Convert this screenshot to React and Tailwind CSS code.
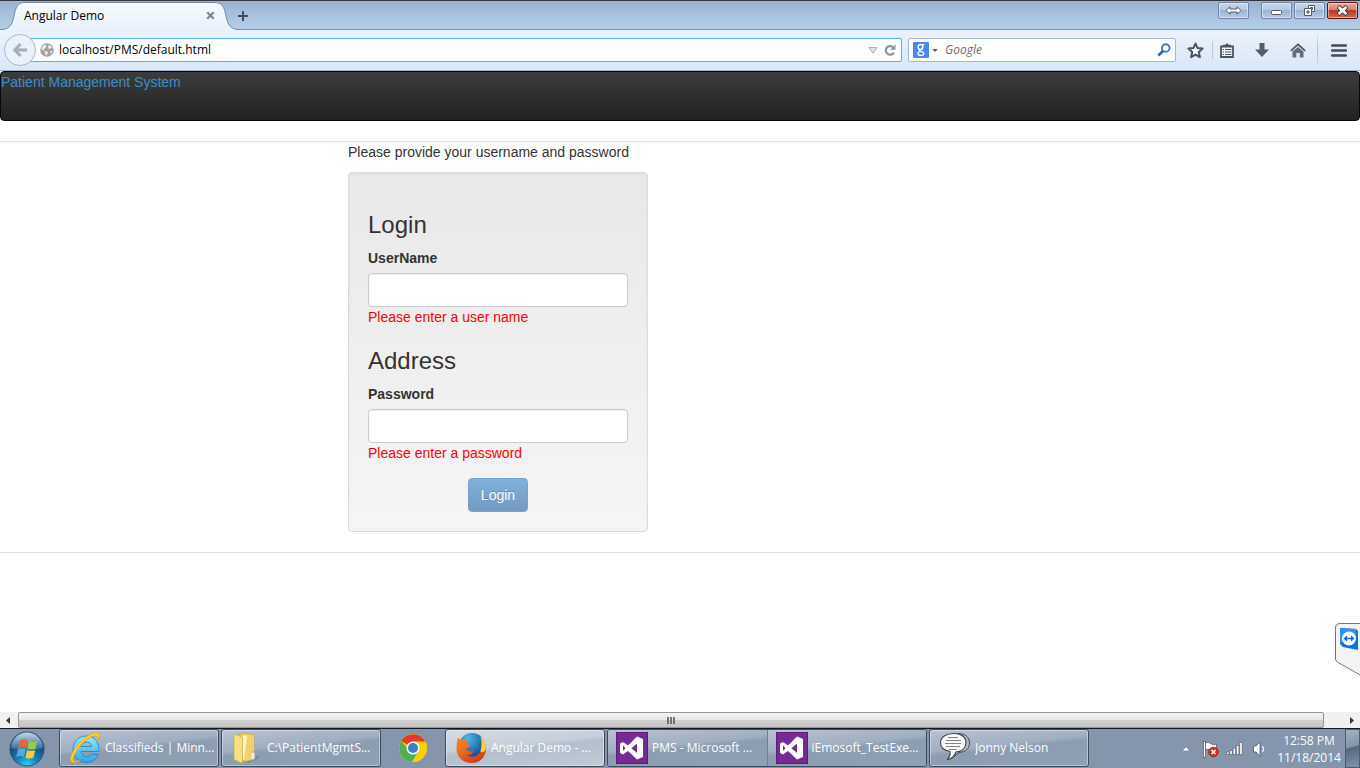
import React from "react";

const uiFont = "font-['Open_Sans','Noto_Sans',sans-serif]";

function Tab() {
  return (
    <div className="relative h-[29px] w-[240px] shrink-0">
      <svg className="absolute left-0 top-0" width="240" height="30" viewBox="0 0 240 30" aria-hidden="true">
        <defs>
          <linearGradient id="tabFill" x1="0" y1="0" x2="0" y2="1">
            <stop offset="0" stopColor="#f6fafe" />
            <stop offset="1" stopColor="#e9f1fb" />
          </linearGradient>
        </defs>
        <path d="M0 30V28.500C9 28.500 12 25 14 15C16 5 18 1.500 25 1.500H214C222 1.500 224 5 226 15C228 25 231 28.500 240 28.500V30Z" fill="url(#tabFill)" />
        <path d="M0 28.500C9 28.500 12 25 14 15C16 5 18 1.500 25 1.500H214C222 1.500 224 5 226 15C228 25 231 28.500 240 28.500" fill="none" stroke="#6f89a6" />
      </svg>
      <div className="relative flex h-full items-center justify-between pl-6 pr-[22px]">
        <h2 className="text-[12px] leading-[16px] text-black">Angular Demo</h2>
        <button aria-label="Close tab" className="flex h-4 w-4 items-center justify-center">
          <svg width="9" height="9" viewBox="0 0 9 9">
            <path d="M1.200 1.200L7.800 7.800M7.800 1.200L1.200 7.800" stroke="#7c8793" strokeWidth="2.200" />
          </svg>
        </button>
      </div>
    </div>
  );
}

function CaptionButton({ label, close, children }) {
  const tone = close
    ? "border-[#5a1420] bg-[linear-gradient(#e6aa9d_0%,#d9806f_48%,#b93a26_50%,#cf6a4c_100%)]"
    : "border-[#6d83a3] bg-[linear-gradient(#c5d6ea_0%,#b4c9e1_48%,#9ab3d0_50%,#b5cce5_100%)]";
  return (
    <button
      aria-label={label}
      className={"flex h-[17px] w-[31px] items-center justify-center rounded-[2px] border shadow-[inset_0_0_0_1px_rgba(255,255,255,0.45)] " + tone}
    >
      {children}
    </button>
  );
}

function TitleBar() {
  return (
    <header className="flex h-[30px] items-start justify-between border-b border-t border-b-[#7892af] border-t-[#3b3639] bg-[linear-gradient(#98b3d3,#b5cee9)]">
      <div className="flex items-center">
        <Tab />
        <button aria-label="Open a new tab" className="-ml-[3px] flex h-[29px] w-3 items-center justify-center">
          <svg width="12" height="12" viewBox="0 0 12 12">
            <path d="M6 1V11M1 6H11" stroke="#3f4c59" strokeWidth="2" />
          </svg>
        </button>
      </div>
      <div className="flex gap-0.5 pr-0.5 pt-px">
        <div className="mr-[10px] flex">
          <CaptionButton label="Resize">
            <svg width="17" height="9" viewBox="0 0 17 9">
              <path d="M1 4.500L5 .8V3H12V.8L16 4.500L12 8.200V6H5V8.200Z" fill="#fff" stroke="#535b68" />
            </svg>
          </CaptionButton>
        </div>
        <CaptionButton label="Minimize">
          <svg width="11" height="11" viewBox="0 0 11 11">
            <rect x=".5" y="5.500" width="10" height="4" rx="1" fill="#fff" stroke="#535b68" />
          </svg>
        </CaptionButton>
        <CaptionButton label="Restore">
          <svg width="11" height="11" viewBox="0 0 11 11">
            <path d="M4.500 .5H10.500V6.500H4.500Z" fill="#fff" stroke="#535b68" />
            <path d="M6.500 2.500H8.500V4.500H6.500Z" fill="#9ab3d0" stroke="#535b68" />
            <path d="M.5 3.500H7.500V10.500H.5Z" fill="#fff" stroke="#535b68" />
            <path d="M3 6H5V8H3Z" fill="#9ab3d0" stroke="#535b68" />
          </svg>
        </CaptionButton>
        <CaptionButton label="Close" close>
          <svg width="13" height="11" viewBox="0 0 13 11">
            <path d="M2 1.500L11 9.500M11 1.500L2 9.500" stroke="#4a3a42" strokeWidth="4.600" />
            <path d="M2.600 2L10.400 9M10.400 2L2.600 9" stroke="#fff" strokeWidth="2.600" />
          </svg>
        </CaptionButton>
      </div>
    </header>
  );
}

function ToolButton({ label, width, children }) {
  return (
    <button aria-label={label} className={"flex h-10 shrink-0 items-center justify-center " + width}>
      {children}
    </button>
  );
}

function Toolbar() {
  return (
    <div className="flex h-[41px] items-center border-b border-[#a2b8ce] bg-[linear-gradient(#ebf2fb,#d9e7f7)]">
      <button
        aria-label="Back"
        className="relative z-10 ml-1 flex h-8 w-8 shrink-0 items-center justify-center rounded-full border border-[#a9bacb] bg-[#e9f1fa]"
      >
        <svg width="14" height="14" viewBox="0 0 14 14">
          <path d="M7.500 1L1.800 7L7.500 13M2 7H14" fill="none" stroke="#a4adb8" strokeWidth="3" />
        </svg>
      </button>
      <div className="-ml-[6px] flex h-6 min-w-0 flex-1 items-center rounded-r-[2px] border border-[#5cadf2] bg-white pl-[9px] pr-[5px]">
        <svg className="shrink-0" width="14" height="14" viewBox="0 0 14 14" aria-hidden="true">
          <circle cx="7" cy="7" r="6.800" fill="#a3a3a3" />
          <path d="M2 4L4 2L6.500 2L6 4L4.500 5.500L3.500 7.500L1.500 6.500ZM9 1.500L11 3L12.500 5.500L10.500 5L9 6.500L8 4.500ZM4.500 8L7.500 8.500L8 10L6.500 12.500L5 11ZM10 8L12.500 8L10.500 11Z" fill="#ececec" />
        </svg>
        <input
          aria-label="Address"
          defaultValue="localhost/PMS/default.html"
          className="ml-[5px] min-w-0 flex-1 bg-transparent text-[12px] leading-[16px] text-black outline-none"
        />
        <button aria-label="History" className="mr-[6px]">
          <svg width="10" height="7" viewBox="0 0 10 7">
            <path d="M.8 .5H9.200L5 6.300Z" fill="#dde3e9" stroke="#a6b1bd" />
          </svg>
        </button>
        <button aria-label="Reload">
          <svg width="12" height="12" viewBox="0 0 12 12">
            <path d="M9 3.200A4.300 4.300 0 1 0 9.800 8.600" fill="none" stroke="#8996a4" strokeWidth="2.200" />
            <path d="M11.500 .3V5.700H6.200Z" fill="#8996a4" />
          </svg>
        </button>
      </div>
      <div className="ml-[6px] flex h-6 w-[268px] shrink-0 items-center rounded-[2px] border border-[#a3b8cf] bg-white pl-1 pr-1">
        <button aria-label="Choose search engine" className="flex items-center gap-[3px]">
          <svg width="16" height="16" viewBox="0 0 16 16">
            <rect width="16" height="16" rx="1" fill="#4787ee" />
            <g fill="none" stroke="#fff">
              <ellipse cx="7.500" cy="5" rx="2.300" ry="2.500" strokeWidth="1.400" />
              <path d="M8.500 2.600H11.500M6.500 7.400C5.500 8.500 6.500 8.900 8.500 9.400" strokeWidth="1.100" />
              <ellipse cx="7.800" cy="11.500" rx="3" ry="1.900" strokeWidth="1.300" />
            </g>
          </svg>
          <svg width="6" height="3" viewBox="0 0 6 3">
            <path d="M0 0H6L3 3Z" fill="#666" />
          </svg>
        </button>
        <input
          aria-label="Search"
          placeholder="Google"
          className="ml-[7px] min-w-0 flex-1 bg-transparent text-[12px] italic leading-[16px] outline-none placeholder:text-[#6c6c6c]"
        />
        <button aria-label="Submit search">
          <svg width="14" height="14" viewBox="0 0 14 14">
            <circle cx="8.800" cy="5" r="3.800" fill="none" stroke="#3c7ab9" strokeWidth="1.900" />
            <path d="M6 8L1.300 12.500" stroke="#3465a4" strokeWidth="2.700" />
          </svg>
        </button>
      </div>
      <div className="ml-[3px] flex items-center text-[#49545f]">
        <ToolButton label="Bookmark this page" width="w-[33px]">
          <svg width="17" height="17" viewBox="0 0 17 17">
            <path d="M8.500 1.600L10.600 6.100L15.600 6.600L11.800 10L12.900 15.200L8.500 12.600L4.100 15.200L5.200 10L1.400 6.600L6.400 6.100Z" fill="#f3f7fb" stroke="currentColor" strokeWidth="2" strokeLinejoin="round" />
          </svg>
        </ToolButton>
        <span className="h-[18px] w-px bg-[#b9c9da]" />
        <ToolButton label="Bookmarks" width="w-[28px]">
          <svg width="14" height="15" viewBox="0 0 14 15">
            <path d="M1 3.500H13V14H1Z" fill="#f3f7fb" stroke="currentColor" strokeWidth="1.800" />
            <path d="M3 3.500V1.800H5.500L7 0L8.500 1.800H11V3.500Z" fill="currentColor" />
            <path d="M2.500 6.500H4M5 6.500H11.500M2.500 9H4M5 9H11.500M2.500 11.500H4M5 11.500H11.500" stroke="currentColor" strokeWidth="1" />
          </svg>
        </ToolButton>
        <ToolButton label="Downloads" width="w-[42px]">
          <svg width="14" height="14" viewBox="0 0 14 14">
            <path d="M4.500 0H9.500V6.500H14L7 14L0 6.500H4.500Z" fill="#525e69" />
          </svg>
        </ToolButton>
        <ToolButton label="Home" width="w-[30px]">
          <svg width="16" height="15" viewBox="0 0 16 15">
            <path d="M2.500 8.500L8 4L13.500 8.500V14.500H9.800V10H6.300V14.500H2.500Z" fill="#626d77" />
            <path d="M.8 7.800L8 1.300L15.200 7.800" fill="none" stroke="#49545f" strokeWidth="1.700" />
          </svg>
        </ToolButton>
        <span className="ml-1 h-9 w-px bg-[linear-gradient(transparent,#a6b8cb,transparent)]" />
        <ToolButton label="Menu" width="w-[42px]">
          <svg width="16" height="13" viewBox="0 0 16 13">
            <path d="M1.200 1.500H14.800M1.200 6.500H14.800M1.200 11.500H14.800" stroke="#414c57" strokeWidth="2.600" strokeLinecap="round" />
          </svg>
        </ToolButton>
      </div>
    </div>
  );
}

function Field({ heading, id, label, type, error }) {
  return (
    <section className="flex flex-col">
      <h3 className="mb-[10px] text-[24px] leading-[26px]">{heading}</h3>
      <label htmlFor={id} className="mb-[5px] font-bold">{label}</label>
      <input
        id={id}
        type={type}
        className="h-[34px] w-full rounded-[4px] border border-[#ccc] bg-white px-3 shadow-[inset_0_1px_1px_rgba(0,0,0,0.075)] outline-none"
      />
      <p className="text-[#f00]">{error}</p>
    </section>
  );
}

function Page() {
  return (
    <div className="relative flex-1 bg-white font-['Liberation_Sans',Arial,sans-serif] text-[14px] leading-[20px] text-[#333]">
      <nav className="h-[50px] rounded-[4px] border border-[#080808] bg-[linear-gradient(#3c3c3c,#222)] text-[#428bca]">
        <a href="#home">Patient Management System</a>
      </nav>
      <main className="mt-5 border-y border-[#e0e0e0] pb-5">
        <div className="ml-[348px] w-[300px]">
          <p className="mb-[10px]">Please provide your username and password</p>
          <form
            onSubmit={(e) => e.preventDefault()}
            className="rounded-[4px] border border-[#dcdcdc] bg-[linear-gradient(#e8e8e8,#f5f5f5)] px-[19px] pb-[19px] pt-[39px] shadow-[inset_0_1px_3px_rgba(0,0,0,0.05),0_1px_0_rgba(255,255,255,0.1)]"
          >
            <div className="flex flex-col gap-[21px]">
              <Field heading="Login" id="username" label="UserName" type="text" error="Please enter a user name" />
              <Field heading="Address" id="password" label="Password" type="password" error="Please enter a password" />
            </div>
            <div className="mt-[15px] flex justify-center">
              <button className="h-[34px] rounded-[4px] border border-[#77a3cb] bg-[linear-gradient(#81b0da,#729bc0)] px-3 text-white [text-shadow:0_-1px_0_rgba(0,0,0,0.2)]">
                Login
              </button>
            </div>
          </form>
        </div>
      </main>
      <button aria-label="TeamViewer" className="absolute bottom-[36px] right-0">
        <svg width="25" height="53" viewBox="0 0 25 53">
          <path d="M26 .5H5Q.5 .5 .5 5V36Q.5 38 2.500 39.200L26 52.500" fill="#f4f4f4" stroke="#777" />
          <path d="M5 5L21 6L23 8V27L8 24L5 21Z" fill="#0c72df" />
          <path d="M5 5L21 6V16L5 20Z" fill="#2f93f4" />
          <circle cx="14" cy="15.500" r="7" fill="#f7fbff" />
          <path d="M8.500 15.500L12 12.500V14.700H16V12.500L19.500 15.500L16 18.500V16.300H12V18.500Z" fill="#0f6bd0" />
        </svg>
      </button>
    </div>
  );
}

function ScrollBar() {
  return (
    <div className="flex h-4 bg-[#f0f0f0]">
      <button aria-label="Scroll left" className="mr-[2px] flex w-4 items-center justify-center">
        <svg width="4" height="7" viewBox="0 0 4 7"><path d="M4 0V7L0 3.500Z" fill="#333" /></svg>
      </button>
      <div className="flex flex-1 items-center justify-center rounded-[2px] border border-[#949494] bg-[linear-gradient(#f4f4f4_0%,#e6e6e6_48%,#d0d0d0_52%,#c4c4c4_100%)]">
        <svg width="8" height="7" viewBox="0 0 8 7" aria-hidden="true">
          <path d="M1 0V7M4 0V7M7 0V7" stroke="#505050" strokeWidth="1.500" />
        </svg>
      </div>
      <button aria-label="Scroll right" className="ml-[19px] flex w-[17px] items-center justify-center">
        <svg width="4" height="7" viewBox="0 0 4 7"><path d="M0 0V7L4 3.500Z" fill="#333" /></svg>
      </button>
    </div>
  );
}

function WindowsOrb() {
  return (
    <svg width="36" height="36" viewBox="0 0 36 36" aria-hidden="true">
      <defs>
        <radialGradient id="orb" cx=".5" cy="1" r=".95">
          <stop offset="0" stopColor="#35d4fa" />
          <stop offset=".35" stopColor="#1581be" />
          <stop offset=".7" stopColor="#174f80" />
          <stop offset="1" stopColor="#4f81a8" />
        </radialGradient>
        <linearGradient id="orbShine" x1="0" y1="0" x2="0" y2="1">
          <stop offset="0" stopColor="#dce9f2" stopOpacity=".8" />
          <stop offset="1" stopColor="#9ec0d8" stopOpacity=".25" />
        </linearGradient>
      </defs>
      <circle cx="18" cy="18" r="17" fill="url(#orb)" stroke="#2b4d70" />
      <path d="M2.500 17A15.500 15.500 0 0 1 33.500 17Q18 21 2.500 17Z" fill="url(#orbShine)" />
      <path d="M11 9.500Q15 7 18.500 9.200L17 17Q13.500 15 9.200 17Z" fill="#ec6530" />
      <path d="M20 9.800Q24 12 28.300 9.800L26.500 17.500Q22.500 19.500 18.300 17.500Z" fill="#9bcb42" />
      <path d="M8.900 18.300Q13 16.400 16.700 18.400L15 26Q11.500 24 7.200 26Z" fill="#4ca9e4" />
      <path d="M18 18.900Q22 20.800 26.200 18.900L24.500 26.500Q20.500 28.500 16.400 26.700Z" fill="#fdcb38" />
    </svg>
  );
}

function ExplorerIcon() {
  return (
    <svg width="32" height="32" viewBox="0 0 32 32" aria-hidden="true">
      <defs>
        <linearGradient id="ie" x1="0" y1="0" x2="0" y2="1">
          <stop offset="0" stopColor="#9be6fc" />
          <stop offset="1" stopColor="#28a7e4" />
        </linearGradient>
      </defs>
      <path fillRule="evenodd" d="M30 19.500H12C12.500 25.500 20.500 26 22.500 22.500H29.500C27 28.500 22 30.500 17.500 30.500C9.500 30.500 4 25.500 4 17.500C4 9.500 10 4 17.500 4C25.500 4 30.500 10.500 30 19.500ZM12 14.500H22.500C22 8.500 12.500 8.500 12 14.500Z" fill="url(#ie)" stroke="#1683c2" strokeWidth=".8" />
      <path d="M7 20.500C2 28 3 31.500 11 28C5 32.500 -.5 31 2 24C6 13 19 1 27 .7C31 .6 31.500 4 29.500 8.500C29.500 4 27 3 23 4.500C16 7.500 11 13 7 20.500Z" fill="#ffd02e" stroke="#dfa51a" strokeWidth=".7" />
    </svg>
  );
}

function FolderIcon() {
  return (
    <svg width="32" height="32" viewBox="0 0 32 32" aria-hidden="true">
      <path d="M18 28L29 23L25 28L16 31Z" fill="#53606d" opacity=".4" />
      <path d="M8 1.500H18L23 3V27L12 29L8 27Z" fill="#eac95f" stroke="#c7a344" strokeWidth=".6" />
      <path d="M11 4L16 3L17 26L12 28Z" fill="#fff5be" />
      <path d="M3 2L11.500 5V31.500L3 27.500Z" fill="#f7df85" stroke="#c9a74c" strokeWidth=".7" />
      <path d="M16 4L23 3V28L13 29Z" fill="#f0d16d" />
      <path d="M21 20H24V27L20 28" fill="#e4edf2" stroke="#b19752" strokeWidth=".8" />
    </svg>
  );
}

function ChromeIcon() {
  return (
    <svg width="28" height="28" viewBox="0 0 28 28" aria-hidden="true">
      <circle cx="14" cy="14" r="14" fill="#fbd007" />
      <path d="M14 14L2 7A14 14 0 0 1 26.500 8Z" fill="#e33b2e" />
      <path d="M2 7A14 14 0 0 0 13 28L19.500 17L14 14L8 14Z" fill="#4caf50" />
      <path d="M14 7.500H26.300A14 14 0 0 1 13 28L19.600 17.200Z" fill="#fbd007" />
      <circle cx="14" cy="14" r="6.600" fill="#f5f5f5" />
      <circle cx="14" cy="14" r="5" fill="#3b7fc6" />
    </svg>
  );
}

function FirefoxIcon() {
  return (
    <svg width="32" height="32" viewBox="0 0 32 32" aria-hidden="true">
      <defs>
        <linearGradient id="fox" x1="0" y1="0" x2=".6" y2="1">
          <stop offset="0" stopColor="#f08a26" />
          <stop offset=".5" stopColor="#ea6a1f" />
          <stop offset="1" stopColor="#d43d16" />
        </linearGradient>
        <radialGradient id="globe" cx=".35" cy=".2" r=".8">
          <stop offset="0" stopColor="#43bdee" />
          <stop offset="1" stopColor="#123f82" />
        </radialGradient>
      </defs>
      <circle cx="17" cy="14.500" r="13.500" fill="url(#globe)" />
      <path d="M25.500 4.500C31 8 32 15 29.500 21C27 28 20 30 15 27C22 28 25 23 25.500 19C27 14 27 9 25.500 4.500Z" fill="#ffd23a" />
      <path d="M3 5.500L5.500 8C8 6.500 11 6.500 13.500 8.500L12 11.500L15.500 13L15 14.500L11.500 16.500C11.500 19 14 20.500 18.500 18.800C18 22 15 23.500 12 22.500C16 26.500 23.500 25 25.500 18.500C27 22 30 20 31 16C31 25 25 31 16.500 31C8 31 1.500 25 1.500 16.500C1.500 12.500 2 9 3 5.500Z" fill="url(#fox)" />
    </svg>
  );
}

function VisualStudioIcon() {
  return (
    <svg width="32" height="32" viewBox="0 0 32 32" aria-hidden="true">
      <rect x=".5" y=".5" width="31" height="31" fill="#752b91" stroke="#5d197b" />
      <path fillRule="evenodd" d="M21 4.500L27 7V25L21 27.500L12 19L7 22.500L4 21V11.500L7 10L12 13.500ZM21 11.500L15.500 16.300L21 21ZM7 13.500V19L9.500 16.200Z" fill="#fff" />
    </svg>
  );
}

function ChatIcon() {
  return (
    <svg width="32" height="32" viewBox="0 0 32 32" aria-hidden="true">
      <path d="M18 1.500C26 1.500 30.500 5 30.500 11C30.500 16 27 20 20 20.500L12 27L14 21Z" fill="#b8bcc0" stroke="#3f444a" />
      <path d="M15 1.500C22 1.500 27 5 27 10.500C27 16 23 19.500 17 20C16 24 12 27 8.500 27.500C10.500 25 11.500 22 11 19.500C5 18.500 1.500 15.500 1.500 10.500C1.500 5 7 1.500 15 1.500Z" fill="#fafafa" stroke="#3c4147" strokeWidth="1.100" />
      <path d="M9 5.500H19M7 8.500H22M6 11.500H22M7 14.500H21M10 17.500H18" stroke="#858585" />
    </svg>
  );
}

function TaskButton({ icon, text, framed = true, active = false }) {
  const frame = framed ? "w-40 rounded-[3px] border border-[#3d4a5a] shadow-[inset_0_0_0_1px_rgba(255,255,255,0.4)] pl-[9px] " : "flex-1 pl-2 ";
  const tone = active
    ? "bg-[linear-gradient(174deg,#d6dce6_0%,#c6ced9_42%,#b3bfcc_50%,#becad5_100%)]"
    : "bg-[linear-gradient(174deg,#b9c3d3_0%,#a0aec1_42%,#8c9db2_50%,#8fa1b5_100%)]";
  return (
    <button className={"flex h-full min-w-0 items-center gap-1 " + frame + tone}>
      <span className="shrink-0">{icon}</span>
      <span className="overflow-hidden whitespace-nowrap text-[12px] leading-[16px] text-white">{text}</span>
    </button>
  );
}

function Tray() {
  return (
    <div className="flex h-full items-center">
      <button aria-label="Show hidden icons">
        <svg width="8" height="5" viewBox="0 0 8 5"><path d="M0 5L4 .5L8 5Z" fill="#fff" stroke="#495a70" strokeWidth=".6" /></svg>
      </button>
      <svg className="ml-[12px]" width="18" height="18" viewBox="0 0 18 18" role="img" aria-label="Action Center">
        <path d="M2.500 1V17.500" stroke="#34404f" strokeWidth="3" />
        <path d="M2.500 1.500V17" stroke="#fff" strokeWidth="1.600" />
        <path d="M3.500 3Q6 1.500 8.500 3.500T14.500 4V10Q11 12 8.500 10T3.500 10Z" fill="#fff" stroke="#445267" strokeWidth=".7" />
        <circle cx="11.500" cy="12" r="4.800" fill="#dd2e24" stroke="#a31512" strokeWidth=".8" />
        <path d="M9.500 10L13.500 14M13.500 10L9.500 14" stroke="#fff" strokeWidth="1.700" />
      </svg>
      <svg className="ml-[6px]" width="17" height="13" viewBox="0 0 17 13" role="img" aria-label="Network">
        <path d="M.5 10H3V12.500H.5ZM3.800 8.500H6.300V12.500H3.800ZM7.100 6H9.600V12.500H7.100ZM10.400 3.500H12.900V12.500H10.400ZM13.700 .5H16.200V12.500H13.700Z" fill="#fff" stroke="#445267" strokeWidth=".6" />
      </svg>
      <svg className="ml-[10px]" width="14" height="16" viewBox="0 0 14 16" role="img" aria-label="Volume">
        <path d="M.5 5H3L7 .8V15.200L3 11H.5Z" fill="#fff" stroke="#445267" strokeWidth=".8" />
        <path d="M9.500 5Q11.500 8 9.500 11" fill="none" stroke="#e8edf3" strokeWidth="1.300" />
      </svg>
      <div className="ml-[12px] flex w-[60px] flex-col items-center whitespace-nowrap text-[12px] leading-[17px] text-white">
        <time>12:58 PM</time>
        <time>11/18/2014</time>
      </div>
      <button
        aria-label="Show desktop"
        className="ml-[6px] h-full w-[15px] border border-[#4b5b70] bg-[linear-gradient(165deg,#a2b0c1_0%,#8393a8_45%,#53677f_48%,#8194ab_100%)]"
      />
    </div>
  );
}

function TaskBar() {
  return (
    <footer className="flex h-10 items-stretch border-t border-[#15191f] bg-[#8495ac]">
      <button aria-label="Start" className="flex w-[59px] shrink-0 items-center pl-[9px]">
        <WindowsOrb />
      </button>
      <div className="flex min-w-0 flex-1 gap-0.5 pb-px">
        <TaskButton icon={<ExplorerIcon />} text="Classifieds | Minn..." />
        <TaskButton icon={<FolderIcon />} text="C:\PatientMgmtS..." />
        <button aria-label="Google Chrome" className="flex w-[60px] items-center justify-center">
          <ChromeIcon />
        </button>
        <TaskButton icon={<FirefoxIcon />} text="Angular Demo - ..." active />
        <div className="flex w-80 divide-x divide-[#6f7f93] overflow-hidden rounded-[3px] border border-[#3d4a5a]">
          <TaskButton icon={<VisualStudioIcon />} text="PMS - Microsoft ..." framed={false} />
          <TaskButton icon={<VisualStudioIcon />} text="iEmosoft_TestExe..." framed={false} />
        </div>
        <TaskButton icon={<ChatIcon />} text="Jonny Nelson" />
      </div>
      <Tray />
    </footer>
  );
}

export default function App() {
  return (
    <div className={"flex min-h-screen flex-col " + uiFont}>
      <TitleBar />
      <Toolbar />
      <Page />
      <ScrollBar />
      <TaskBar />
    </div>
  );
}
